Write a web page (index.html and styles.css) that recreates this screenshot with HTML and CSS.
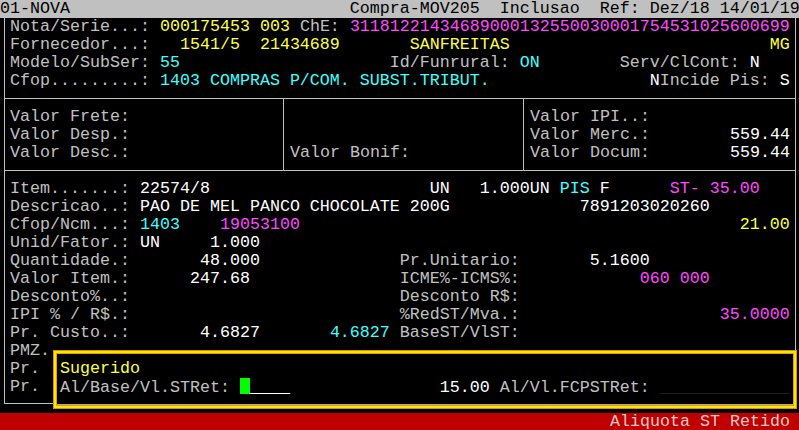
FILE: index.html
```html
<!DOCTYPE html>
<html>
<head>
<meta charset="utf-8">
<link rel="stylesheet" href="styles.css">
</head>
<body>
<div class="screen">
  <div class="title">01-NOVA                            Compra-MOV205  Inclusao  Ref: Dez/18 14/01/19</div>
  <div class="frame">
    <div class="box box1">
      <div class="row">Nota/Serie...: <span class="y">000175453 003</span> ChE: <span class="m">31181221434689000132550030001754531025600699</span></div>
      <div class="row">Fornecedor...: <span class="y">  1541/5  21434689       SANFREITAS                          MG</span></div>
      <div class="row">Modelo/SubSer: <span class="c">55</span>                     Id/Funrural: <span class="c">ON</span>        Serv/ClCont: <span class="w">N</span></div>
      <div class="row">Cfop.........: <span class="c">1403 COMPRAS P/COM. SUBST.TRIBUT.</span>                <span class="w">N</span>Incide Pis: <span class="w">S</span></div>
    </div>
    <div class="box box2">
      <div class="cell cell1">
        <div class="row">Valor Frete:</div>
        <div class="row">Valor Desp.:</div>
        <div class="row">Valor Desc.:</div>
      </div>
      <div class="cell cell2">
        <div class="row"> </div>
        <div class="row"> </div>
        <div class="row">Valor Bonif:</div>
      </div>
      <div class="cell cell3">
        <div class="row">Valor IPI..:</div>
        <div class="row">Valor Merc.:        <span class="w">559.44</span></div>
        <div class="row">Valor Docum:        <span class="w">559.44</span></div>
      </div>
    </div>
    <div class="box box3">
      <div class="row">Item.......: <span class="w">22574/8</span>                      <span class="w">UN</span>   <span class="w">1.000UN</span> <span class="c">PIS</span> <span class="w">F</span>      <span class="m">ST- 35.00</span></div>
      <div class="row">Descricao..: <span class="w">PAO DE MEL PANCO CHOCOLATE 200G</span>             <span class="w">7891203020260</span></div>
      <div class="row">Cfop/Ncm...: <span class="c">1403</span>    <span class="m">19053100</span>                                            <span class="y">21.00</span></div>
      <div class="row">Unid/Fator.: <span class="w">UN</span>     <span class="w">1.000</span></div>
      <div class="row">Quantidade.:       <span class="w">48.000</span>              Pr.Unitario:       <span class="w">5.1600</span></div>
      <div class="row">Valor Item.:      <span class="w">247.68</span>               ICME%-ICMS%:            <span class="m">060 000</span></div>
      <div class="row">Desconto%..:                           Desconto R$:</div>
      <div class="row">IPI % / R$.:                           %RedST/Mva.:                    <span class="m">35.0000</span></div>
      <div class="row">Pr. Custo..:       <span class="w">4.6827</span>       <span class="c">4.6827</span> BaseST/VlST:</div>
      <div class="row">PMZ.</div>
      <div class="row">Pr.</div>
      <div class="row">Pr.</div>
      <div class="popup">
        <div class="row"><span class="y">Sugerido</span></div>
        <div class="row">Al/Base/Vl.STRet: <span class="cursor"></span><span class="w">____</span>               <span class="w">15.00</span> Al/Vl.FCPSTRet: <span class="dim">_____________</span></div>
      </div>
    </div>
  </div>
  <div class="status">Aliquota ST Retido</div>
</div>
</body>
</html>
```
FILE: styles.css
```css
html, body {
  margin: 0;
  padding: 0;
  background: #000;
}
body {
  width: 799px;
  height: 430px;
  overflow: hidden;
  font-family: "Liberation Mono", "DejaVu Sans Mono", monospace;
  font-size: 16.6667px;
  line-height: 18px;
  color: #c0c0c0;
}
.screen {
  width: 799px;
}
.title {
  height: 18px;
  background: #c0c0c0;
  color: #000;
  white-space: pre;
}
.row {
  height: 18px;
  white-space: pre;
}
.frame {
  margin-left: 4px;
  width: 792px;
}
.box {
  box-sizing: border-box;
  border-left: 1px solid #c0c0c0;
  border-right: 1px solid #c0c0c0;
  border-bottom: 1px solid #c0c0c0;
}
.box1 {
  padding: 0 0 8px 5px;
}
.box2 {
  display: grid;
  grid-template-columns: 278px 240px 1fr;
}
.cell {
  padding: 9px 0 8px 0;
}
.cell1 {
  padding-left: 5px;
}
.cell2 {
  border-left: 1px solid #c0c0c0;
  padding-left: 6px;
}
.cell3 {
  border-left: 1px solid #c0c0c0;
  padding-left: 6px;
}
.box3 {
  position: relative;
  padding: 9px 0 7px 5px;
}
.popup {
  position: absolute;
  left: 48px;
  top: 179px;
  width: 744px;
  height: 59px;
  box-sizing: border-box;
  background: #000;
  border: 1px solid #d89400;
  box-shadow: inset 0 0 0 2px #ffe600, inset 0 0 0 3px #e0a000, inset 0 -4px 0 0 #a8a8a8;
  padding: 9px 0 0 6px;
}
.cursor {
  display: inline-block;
  width: 10px;
  height: 16px;
  background: #00ff00;
  vertical-align: -2px;
}
.status {
  margin-top: 9px;
  height: 18px;
  background: #c00000;
  color: #e0c8c8;
  text-align: right;
  padding-right: 9px;
  white-space: pre;
}
.y { color: #ffff40; }
.c { color: #40ffff; }
.m { color: #ff48ff; }
.w { color: #ffffff; }
.dim { color: #1c1c1c; }
```
